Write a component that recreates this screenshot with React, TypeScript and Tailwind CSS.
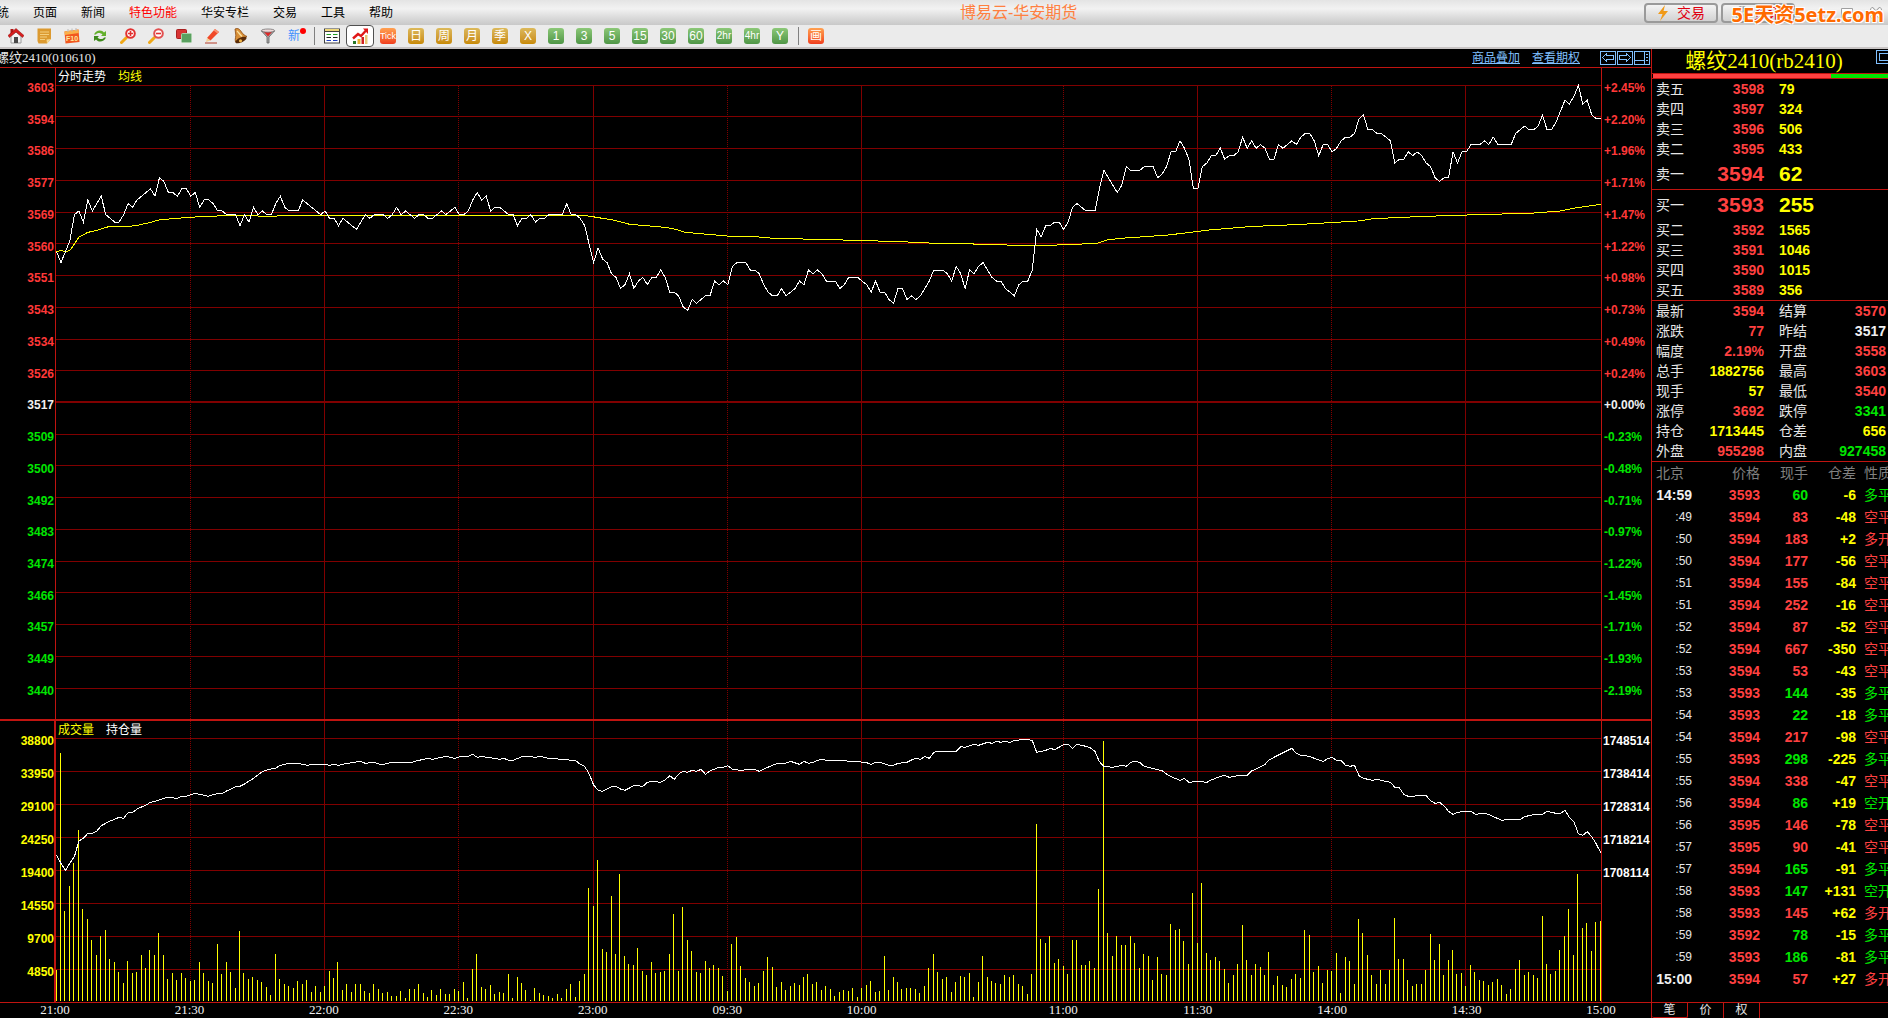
import React, { useState } from 'react'

const STEP = 4.476;
const BASE_PRICE = 3517;
const TOP_PRICE = 3603;

// one close price per minute, 21:00 -> 15:00
const prices = [
    3558, 3555, 3558, 3561, 3568, 3569, 3566, 3572, 3569, 3571, 3573, 3568, 3567, 3566, 3566, 3568, 3571, 3570, 3572, 3573,
    3574, 3575, 3573, 3578, 3577, 3574, 3574, 3573, 3575, 3575, 3573, 3574, 3570, 3572, 3572, 3571, 3569, 3569, 3568, 3568,
    3568, 3565, 3568, 3566, 3570, 3568, 3569, 3568, 3568, 3571, 3573, 3570, 3569, 3569, 3569, 3572, 3571, 3570, 3569, 3568,
    3569, 3567, 3567, 3565, 3567, 3566, 3565, 3564, 3566, 3568, 3567, 3568, 3568, 3568, 3567, 3568, 3570, 3568, 3569, 3568,
    3567, 3568, 3568, 3567, 3567, 3568, 3569, 3568, 3569, 3570, 3568, 3568, 3569, 3572, 3574, 3572, 3573, 3569, 3570, 3570,
    3569, 3568, 3568, 3565, 3567, 3567, 3568, 3566, 3567, 3567, 3568, 3568, 3568, 3568, 3571, 3568, 3568, 3567, 3565, 3560,
    3555, 3559, 3556, 3555, 3552, 3551, 3548, 3549, 3552, 3548, 3550, 3551, 3549, 3551, 3551, 3553, 3551, 3547, 3547, 3546,
    3543, 3542, 3545, 3544, 3545, 3546, 3546, 3550, 3549, 3550, 3549, 3554, 3555, 3555, 3555, 3553, 3553, 3552, 3549, 3547,
    3546, 3546, 3548, 3546, 3547, 3548, 3550, 3549, 3553, 3552, 3553, 3552, 3550, 3550, 3550, 3548, 3549, 3551, 3551, 3551,
    3550, 3549, 3547, 3550, 3547, 3547, 3545, 3544, 3548, 3548, 3545, 3546, 3545, 3546, 3548, 3550, 3553, 3553, 3553, 3552,
    3550, 3554, 3552, 3548, 3553, 3552, 3554, 3555, 3553, 3551, 3550, 3550, 3548, 3547, 3546, 3549, 3550, 3550, 3553, 3564,
    3562, 3565, 3565, 3566, 3566, 3564, 3566, 3570, 3571, 3570, 3569, 3569, 3569, 3575, 3580, 3578, 3576, 3574, 3576, 3581,
    3580, 3580, 3580, 3581, 3581, 3581, 3578, 3579, 3581, 3585, 3585, 3588, 3586, 3583, 3575, 3575, 3581, 3582, 3584, 3584,
    3586, 3583, 3584, 3584, 3585, 3589, 3586, 3588, 3586, 3587, 3586, 3583, 3583, 3587, 3586, 3587, 3588, 3587, 3589, 3590,
    3590, 3588, 3584, 3587, 3587, 3585, 3586, 3588, 3589, 3589, 3590, 3594, 3595, 3591, 3591, 3590, 3590, 3589, 3588, 3582,
    3583, 3583, 3585, 3584, 3585, 3584, 3582, 3581, 3578, 3577, 3578, 3578, 3585, 3582, 3585, 3585, 3587, 3587, 3587, 3588,
    3587, 3589, 3587, 3587, 3587, 3587, 3590, 3591, 3592, 3591, 3591, 3592, 3595, 3591, 3591, 3593, 3596, 3599, 3598, 3600,
    3603, 3598, 3599, 3595, 3594, 3594,
];

// [minute, average price]
const averages = [
    [0, 3557.9], [1, 3558.3], [2, 3558], [3, 3558.3], [5, 3561.9], [7, 3563.2], [9, 3563.7], [11.5, 3564.7], [16, 3564.8],
    [18, 3565.1], [21, 3565.9], [23, 3566.6], [26, 3566.9], [30, 3567.3], [37, 3567.7], [49, 3567.6], [51, 3567.8],
    [118, 3567.8], [124.5, 3566.5], [128, 3565.4], [136.5, 3564.5], [139, 3563.8], [140.5, 3563.2], [150, 3562.2],
    [156.5, 3562], [160, 3561.6], [180, 3561], [190, 3560.6], [197, 3560.2], [207, 3560], [214, 3559.7], [222, 3559.7],
    [232.5, 3560.2], [234.5, 3561.1], [238, 3561.6], [248.5, 3562.5], [258, 3563.9], [267, 3564.8], [277, 3565.3],
    [291, 3566.3], [294, 3566.9], [305, 3567.5], [315, 3567.9], [329.5, 3568.4], [336, 3569], [339.3, 3569.8], [345, 3570.8],
];

// top of each volume bar, counted downwards, 99 units to a grid row, 903 is zero
const VOLUME_ZERO = 903;
const volumes = [
    810, 159, 633, 558, 489, 390, 627, 657, 720, 765, 708, 690, 777, 786, 816, 849, 783, 819, 816, 765,
    804, 750, 765, 699, 765, 837, 819, 840, 819, 834, 843, 840, 786, 819, 843, 849, 732, 822, 786, 816,
    864, 693, 819, 837, 831, 840, 846, 861, 885, 762, 837, 852, 858, 864, 843, 852, 840, 876, 858, 876,
    858, 813, 834, 786, 870, 852, 876, 852, 852, 873, 879, 852, 867, 879, 876, 888, 888, 873, 894, 867,
    867, 852, 879, 891, 870, 885, 867, 882, 882, 867, 873, 846, 894, 807, 762, 861, 867, 855, 882, 876,
    879, 822, 894, 831, 849, 870, 900, 864, 879, 885, 888, 894, 882, 894, 867, 852, 891, 843, 822, 564,
    618, 480, 747, 756, 588, 762, 522, 768, 792, 795, 744, 813, 825, 786, 819, 816, 813, 762, 642, 813,
    621, 720, 753, 816, 819, 783, 804, 795, 804, 828, 873, 732, 711, 798, 834, 846, 858, 849, 813, 771,
    801, 861, 846, 870, 858, 849, 855, 831, 822, 852, 846, 870, 858, 867, 888, 876, 870, 873, 864, 891,
    864, 855, 843, 876, 873, 768, 870, 831, 846, 867, 864, 864, 867, 879, 858, 804, 762, 816, 837, 831,
    876, 846, 828, 831, 819, 891, 846, 768, 831, 843, 849, 852, 825, 831, 825, 852, 858, 882, 822, 372,
    717, 729, 708, 789, 777, 798, 822, 720, 720, 795, 795, 783, 804, 567, 123, 699, 768, 708, 735, 735,
    708, 729, 804, 762, 768, 840, 771, 822, 825, 672, 690, 687, 723, 792, 579, 729, 549, 759, 780, 771,
    783, 807, 849, 825, 792, 675, 780, 825, 792, 801, 825, 756, 855, 828, 855, 861, 837, 822, 834, 690,
    705, 816, 798, 849, 810, 813, 759, 879, 771, 783, 852, 657, 699, 765, 825, 852, 810, 852, 810, 654,
    777, 777, 840, 858, 852, 852, 810, 702, 780, 732, 825, 780, 750, 822, 819, 858, 795, 816, 840, 843,
    855, 846, 837, 855, 882, 867, 807, 780, 825, 816, 825, 834, 648, 792, 822, 813, 750, 708, 627, 765,
    522, 684, 669, 753, 666, 663,
];

// [minute, open interest] on the same scale as the volumes
const openInterest = [
    [0, 465], [1, 490], [2, 511], [3, 489], [4, 470], [5, 423], [6, 415], [7, 400], [8, 400], [9, 393], [10, 377],
    [12, 363], [14, 352], [15, 355], [16, 338], [17, 337], [18, 327], [20, 315], [21, 307], [22, 304], [24, 295],
    [25, 292], [27, 295], [28, 289], [29, 289], [31, 280], [33, 286], [34, 289], [35, 283], [37, 280], [38, 273],
    [40, 260], [41, 259], [42, 252], [44, 235], [46, 215], [47, 210], [49, 204], [50, 196], [52, 190], [54, 190],
    [56, 196], [57, 193], [60, 193], [61, 196], [62, 193], [63, 196], [65, 190], [68, 184], [69, 190], [71, 187],
    [72, 192], [73, 193], [75, 187], [79, 189], [80, 184], [83, 175], [84, 178], [87, 169], [89, 175], [90, 171],
    [92, 169], [93, 163], [94, 172], [95, 169], [96, 172], [98, 175], [99, 178], [100, 175], [101, 181], [102, 181],
    [104, 170], [106, 170], [107, 172], [108, 169], [110, 175], [113, 178], [116, 182], [117, 193], [118, 199],
    [119, 222], [120, 255], [121, 271], [122, 274], [123, 267], [124, 260], [125, 259], [126, 267], [127, 271],
    [128, 264], [129, 256], [131, 259], [132, 247], [133, 244], [135, 247], [136, 240], [137, 227], [138, 238],
    [139, 222], [140, 214], [141, 217], [142, 211], [143, 214], [144, 208], [145, 223], [146, 213], [148, 202],
    [149, 202], [150, 197], [151, 208], [153, 211], [155, 208], [156, 208], [157, 214], [158, 207], [160, 196],
    [161, 190], [163, 189], [164, 184], [166, 193], [167, 184], [168, 190], [169, 187], [170, 181], [171, 178],
    [172, 181], [176, 181], [177, 184], [179, 185], [181, 188], [182, 193], [183, 187], [184, 187], [186, 196],
    [187, 196], [188, 190], [190, 187], [191, 180], [192, 175], [193, 178], [194, 170], [195, 175], [196, 157],
    [197, 154], [201, 154], [202, 140], [203, 142], [205, 133], [206, 136], [208, 127], [209, 130], [210, 124],
    [211, 127], [212, 124], [213, 127], [214, 121], [216, 119], [217, 118], [218, 122], [219, 157], [220, 154],
    [221, 151], [222, 145], [223, 149], [225, 134], [226, 133], [227, 145], [228, 133], [230, 139], [231, 144],
    [232, 154], [233, 185], [234, 199], [236, 202], [238, 196], [239, 199], [240, 187], [241, 184], [242, 187],
    [243, 199], [245, 206], [247, 212], [248, 222], [249, 230], [251, 241], [252, 235], [253, 247], [255, 244],
    [257, 247], [258, 240], [260, 229], [261, 226], [262, 232], [264, 227], [266, 226], [267, 213], [269, 200],
    [270, 193], [271, 179], [273, 165], [276, 145], [277, 160], [278, 166], [280, 169], [281, 175], [283, 184],
    [284, 176], [285, 172], [286, 181], [287, 182], [288, 196], [289, 199], [290, 196], [291, 227], [292, 235],
    [294, 241], [295, 238], [297, 244], [298, 247], [299, 262], [300, 263], [301, 283], [302, 289], [305, 287],
    [306, 287], [307, 302], [308, 310], [309, 307], [310, 318], [311, 334], [312, 343], [313, 337], [315, 334],
    [316, 334], [317, 343], [319, 340], [320, 343], [322, 356], [323, 361], [324, 358], [327, 358], [328, 350],
    [330, 344], [332, 343], [333, 334], [335, 340], [336, 340], [337, 331], [338, 352], [339, 365], [340, 401],
    [341, 406], [342, 395], [343, 410], [344, 432], [345, 458],
];

const priceLabels = [
    '3603', '3594', '3586', '3577', '3569', '3560', '3551', '3543', '3534', '3526',
    '3517', '3509', '3500', '3492', '3483', '3474', '3466', '3457', '3449', '3440',
];
const percentLabels = [
    '+2.45%', '+2.20%', '+1.96%', '+1.71%', '+1.47%', '+1.22%', '+0.98%', '+0.73%', '+0.49%', '+0.24%',
    '+0.00%', '-0.23%', '-0.48%', '-0.71%', '-0.97%', '-1.22%', '-1.45%', '-1.71%', '-1.93%', '-2.19%',
];
const volumeLabels = ['38800', '33950', '29100', '24250', '19400', '14550', '9700', '4850'];
const interestLabels = ['1748514', '1738414', '1728314', '1718214', '1708114', '', '', ''];

// minutes is the distance to the next label
const timeLabels = [
    { text: '21:00', minutes: 30 },
    { text: '21:30', minutes: 30 },
    { text: '22:00', minutes: 30 },
    { text: '22:30', minutes: 30 },
    { text: '23:00', minutes: 30 },
    { text: '09:30', minutes: 30 },
    { text: '10:00', minutes: 45 },
    { text: '11:00', minutes: 30 },
    { text: '11:30', minutes: 30 },
    { text: '14:00', minutes: 30 },
    { text: '14:30', minutes: 30 },
    { text: '15:00', minutes: 0 },
];

const solidMinutes = [60, 120, 180, 255, 315];
const dottedMinutes = [30, 90, 150, 225, 285];

const asks = [
    ['卖五', '3598', '79'],
    ['卖四', '3597', '324'],
    ['卖三', '3596', '506'],
    ['卖二', '3595', '433'],
    ['卖一', '3594', '62'],
];
const bids = [
    ['买一', '3593', '255'],
    ['买二', '3592', '1565'],
    ['买三', '3591', '1046'],
    ['买四', '3590', '1015'],
    ['买五', '3589', '356'],
];

const RED = 'text-[#ff4040]';
const GREEN = 'text-[#00e600]';
const YELLOW = 'text-[#ffff00]';
const WHITE = 'text-[#f0f0f0]';

const stats = [
    ['最新', '3594', RED, '结算', '3570', RED],
    ['涨跌', '77', RED, '昨结', '3517', WHITE],
    ['幅度', '2.19%', RED, '开盘', '3558', RED],
    ['总手', '1882756', YELLOW, '最高', '3603', RED],
    ['现手', '57', YELLOW, '最低', '3540', RED],
    ['涨停', '3692', RED, '跌停', '3341', GREEN],
    ['持仓', '1713445', YELLOW, '仓差', '656', YELLOW],
    ['外盘', '955298', RED, '内盘', '927458', GREEN],
];

const ticks = [
    ['14:59', '3593', '60', '-6', '多平', GREEN],
    [':49', '3594', '83', '-48', '空平', RED],
    [':50', '3594', '183', '+2', '多开', RED],
    [':50', '3594', '177', '-56', '空平', RED],
    [':51', '3594', '155', '-84', '空平', RED],
    [':51', '3594', '252', '-16', '空平', RED],
    [':52', '3594', '87', '-52', '空平', RED],
    [':52', '3594', '667', '-350', '空平', RED],
    [':53', '3594', '53', '-43', '空平', RED],
    [':53', '3593', '144', '-35', '多平', GREEN],
    [':54', '3593', '22', '-18', '多平', GREEN],
    [':54', '3594', '217', '-98', '空平', RED],
    [':55', '3593', '298', '-225', '多平', GREEN],
    [':55', '3594', '338', '-47', '空平', RED],
    [':56', '3594', '86', '+19', '空开', GREEN],
    [':56', '3595', '146', '-78', '空平', RED],
    [':57', '3595', '90', '-41', '空平', RED],
    [':57', '3594', '165', '-91', '多平', GREEN],
    [':58', '3593', '147', '+131', '空开', GREEN],
    [':58', '3593', '145', '+62', '多开', RED],
    [':59', '3592', '78', '-15', '多平', GREEN],
    [':59', '3593', '186', '-81', '多平', GREEN],
    ['15:00', '3594', '57', '+27', '多开', RED],
];

const menus = ['系统', '页面', '新闻', '特色功能', '华安专栏', '交易', '工具', '帮助'];

const GOLD = 'bg-linear-to-b from-[#dcb95a] to-[#c88a00]';
const LEAF = 'bg-linear-to-b from-[#8cc878] to-[#4f9646]';
const FIRE = 'bg-linear-to-b from-[#ffa050] to-[#f03c1e]';

const periods = [
    { text: 'Tick', tone: FIRE, size: 'text-[9px]' },
    { text: '日', tone: GOLD, size: 'text-xs' },
    { text: '周', tone: GOLD, size: 'text-xs' },
    { text: '月', tone: GOLD, size: 'text-xs' },
    { text: '季', tone: GOLD, size: 'text-xs' },
    { text: 'X', tone: GOLD, size: 'text-xs' },
    { text: '1', tone: LEAF, size: 'text-xs' },
    { text: '3', tone: LEAF, size: 'text-xs' },
    { text: '5', tone: LEAF, size: 'text-xs' },
    { text: '15', tone: LEAF, size: 'text-xs' },
    { text: '30', tone: LEAF, size: 'text-xs' },
    { text: '60', tone: LEAF, size: 'text-xs' },
    { text: '2hr', tone: LEAF, size: 'text-[10px]' },
    { text: '4hr', tone: LEAF, size: 'text-[10px]' },
    { text: 'Y', tone: LEAF, size: 'text-xs' },
];

const Icon = ({ children }: { children: React.ReactNode }) => (
    <svg viewBox="0 0 16 16" className="h-4 w-4" aria-hidden="true">
        {children}
    </svg>
);

const tools = [
    {
        name: '首页',
        icon: (
            <Icon>
                <path d="M3 8 L8 4 L13 8 V15 H3 Z" fill="#f4f4f4" stroke="#9a9a9a" strokeWidth="1" />
                <path d="M2.5 1 H5.5 V4 L2.5 6 Z" fill="#b01818" />
                <path d="M8 0.5 L16 7.5 L14.5 9.5 L8 4 L1.5 9.5 L0 7.5 Z" fill="#d81e1e" stroke="#8c0e0e" strokeWidth="0.5" />
                <rect x="6" y="9" width="4" height="6" fill="#4a4a4a" />
            </Icon>
        ),
    },
    {
        name: '便签',
        icon: (
            <Icon>
                <path d="M1.5 0.5 H15 V11 L11 15.5 H2.5 L1.5 13 Z" fill="#dc9a30" />
                <path d="M15 11 L11 15.5 L10.5 11.5 Z" fill="#f6d890" />
                <path d="M4 4 H13 M4 6.5 H13 M4 9 H11 M4 11.5 H9" stroke="#f4cf80" strokeWidth="1" />
            </Icon>
        ),
    },
    {
        name: 'F10',
        icon: (
            <Icon>
                <path d="M0.5 3.5 L14.5 1.5 L15.5 14 L1.5 15.5 Z" fill="#f2571e" />
                <path d="M0.5 3.5 L14.5 1.5 L14.8 5 L0.8 7 Z" fill="#fbb04a" />
                <path d="M4 1 V4 M8 0.5 V3.5 M12 0 V3" stroke="#b8b8b8" strokeWidth="1" />
                <text x="8" y="13" fontSize="7" fontWeight="bold" textAnchor="middle" fill="#ffe9a0" fontFamily="Liberation Sans">F10</text>
            </Icon>
        ),
    },
    {
        name: '刷新',
        icon: (
            <Icon>
                <path d="M2 6.5 C4 1.5 10 1.5 12 4.5 L14 3 V8 H9 L10.5 6.5 C8.5 4.5 5 4.5 4 6.5 Z" fill="#63b02c" />
                <path d="M14 9.5 C12 14.5 6 14.5 4 11.5 L2 13 V8 H7 L5.5 9.5 C7.5 11.5 11 11.5 12 9.5 Z" fill="#3e8a1c" />
            </Icon>
        ),
    },
    {
        name: '放大',
        icon: (
            <Icon>
                <path d="M1.5 14.5 L6.5 9.5" stroke="#f0a818" strokeWidth="3" strokeLinecap="round" />
                <circle cx="10.5" cy="5.5" r="4.3" fill="#fff" stroke="#e23030" strokeWidth="2" />
                <path d="M8 5.5 H13 M10.5 3 V8" stroke="#e23030" strokeWidth="1.6" />
            </Icon>
        ),
    },
    {
        name: '缩小',
        icon: (
            <Icon>
                <path d="M1.5 14.5 L6.5 9.5" stroke="#f0a818" strokeWidth="3" strokeLinecap="round" />
                <circle cx="10.5" cy="5.5" r="4.3" fill="#fff" stroke="#e25050" strokeWidth="2" />
                <path d="M8 5.5 H13" stroke="#e23030" strokeWidth="1.6" />
            </Icon>
        ),
    },
    {
        name: '叠加',
        icon: (
            <Icon>
                <rect x="0.5" y="1.5" width="10" height="9" rx="1" fill="#d83434" stroke="#a82020" />
                <rect x="5.5" y="5.5" width="10" height="9" rx="1" fill="#5aa060" stroke="#a8d0a8" />
            </Icon>
        ),
    },
    {
        name: '画线',
        icon: (
            <Icon>
                <path d="M3 10 L11 1 L15 4 L6.5 12.5 Z" fill="#f04828" />
                <path d="M11 1 L15 4 L13.5 5.5 L9.6 2.5 Z" fill="#f89070" />
                <path d="M3 10 L6.5 12.5 L2 14 Z" fill="#f6cf94" />
                <path d="M1 15 H13" stroke="#b43a28" strokeWidth="1" />
            </Icon>
        ),
    },
    {
        name: '预警',
        icon: (
            <Icon>
                <path d="M3 1 C6 -0.5 8 1.5 9.5 4 C11 6.5 13 7.5 15 8.5 L3.5 14 C2.5 11 4.5 8 3.5 5 Z" fill="#d99038" stroke="#8a4a10" strokeWidth="0.8" />
                <path d="M5 3 C7 4.5 8 7 10 8.5" stroke="#fbe0a0" strokeWidth="1.4" fill="none" />
                <ellipse cx="9" cy="12" rx="6" ry="2.4" transform="rotate(-24 9 12)" fill="#5a2c08" />
                <circle cx="8.5" cy="12.8" r="1.6" fill="#f2b84a" />
            </Icon>
        ),
    },
    {
        name: '筛选',
        icon: (
            <Icon>
                <path d="M1.5 3 L7 9 V15 H9 V9 L14.5 3 Z" fill="#a8a8a8" stroke="#606060" strokeWidth="0.8" />
                <path d="M4 4 L8 8.5 L12 4 Z" fill="#e02828" />
                <ellipse cx="8" cy="2.6" rx="6.6" ry="1.6" fill="#f0d8d8" stroke="#707070" strokeWidth="0.8" />
            </Icon>
        ),
    },
];

const toPoints = (rows: number[][], getY: (value: number) => number) =>
    rows.map(([minute, value]) => `${minute * STEP + 0.5},${getY(value)}`).join(' ');

const VerticalGrid = ({ from, to }: { from: number; to: number }) => (
    <g stroke="#800000" shapeRendering="crispEdges">
        {solidMinutes.map((minute) => {
            const x = Math.floor(minute * STEP) + 0.5;
            return <line key={minute} x1={x} x2={x} y1={from} y2={to} vectorEffect="non-scaling-stroke" />;
        })}
        {dottedMinutes.map((minute) => {
            const x = Math.floor(minute * STEP) + 0.5;
            return <line key={minute} x1={x} x2={x} y1={from} y2={to} strokeDasharray="1 1" vectorEffect="non-scaling-stroke" />;
        })}
    </g>
);

const PriceChart = () => {
    const getY = (price: number) => 17.5 + (TOP_PRICE - price) * 3.69;

    return (
        <svg viewBox="0 0 1545 651" preserveAspectRatio="none" className="block min-h-0 w-full min-w-0 flex-1">
            <g stroke="#800000" shapeRendering="crispEdges">
                {priceLabels.map((label, i) => {
                    const isBase = label === String(BASE_PRICE);
                    const y = Math.floor(17.2 + i * 31.73) + (isBase ? 0 : 0.5);
                    return (
                        <line
                            key={label}
                            x1="0"
                            x2="1545"
                            y1={y}
                            y2={y}
                            strokeWidth={isBase ? 2 : 1}
                            vectorEffect="non-scaling-stroke"
                        />
                    );
                })}
            </g>
            <VerticalGrid from={18} to={651} />
            <g fill="none" shapeRendering="crispEdges">
                <polyline points={toPoints(averages, getY)} stroke="#ffff00" vectorEffect="non-scaling-stroke" />
                <polyline
                    points={toPoints(prices.map((price, i) => [i, price]), getY)}
                    stroke="#ffffff"
                    vectorEffect="non-scaling-stroke"
                />
            </g>
        </svg>
    );
};

const VolumeChart = () => {
    const getY = (value: number) => (value - 63) / 3;

    return (
        <svg viewBox="0 0 1545 281" preserveAspectRatio="none" className="block min-h-0 w-full min-w-0 flex-1">
            <g stroke="#800000" shapeRendering="crispEdges">
                {volumeLabels.map((label, i) => (
                    <line key={label} x1="0" x2="1545" y1={17.5 + i * 33} y2={17.5 + i * 33} vectorEffect="non-scaling-stroke" />
                ))}
            </g>
            <VerticalGrid from={0} to={281} />
            <g stroke="#ffff00" shapeRendering="crispEdges">
                {volumes.map((top, i) => {
                    const x = Math.floor(i * STEP) + 0.5;
                    return <line key={i} x1={x} x2={x} y1={getY(top)} y2={getY(VOLUME_ZERO)} vectorEffect="non-scaling-stroke" />;
                })}
            </g>
            <polyline
                points={toPoints(openInterest, getY)}
                fill="none"
                stroke="#ffffff"
                shapeRendering="crispEdges"
                vectorEffect="non-scaling-stroke"
            />
        </svg>
    );
};

const getAxisColor = (index: number) => {
    if (index < 10) return 'text-[#ff3838]';
    return index === 10 ? WHITE : GREEN;
};

const QuoteRow = ({ row, big }: { row: string[]; big: boolean }) => (
    <tr className={big ? 'h-[30px]' : 'h-5'}>
        <th className="w-[50px] pl-1 text-left font-normal text-[#e6e6e6]">{row[0]}</th>
        <td className={`w-[62px] text-right font-bold ${RED} ${big ? 'text-[21px]' : ''}`}>{row[1]}</td>
        <td className={`pl-[15px] font-bold ${YELLOW} ${big ? 'text-[21px]' : ''}`}>{row[2]}</td>
    </tr>
);

const App = () => {
    const [activeTab, setActiveTab] = useState('笔');

    return (
        <div className="flex min-h-screen flex-col overflow-hidden bg-black font-['Liberation_Sans','Noto_Sans_CJK_SC',sans-serif] text-xs">
            <header className="relative flex h-[25px] items-center bg-linear-to-b from-[#e4e4e4] via-[#f2f2f2] via-35% to-[#c8c8c8]">
                <nav className="-ml-[15px] flex gap-6 text-black">
                    {menus.map((menu) => (
                        <button key={menu} className={menu === '特色功能' ? 'text-[#ff0000]' : ''}>
                            {menu}
                        </button>
                    ))}
                </nav>

                <h1 className="flex-1 text-center text-base leading-6 text-[#ff8040]">博易云-华安期货</h1>

                <div className="flex items-center gap-[3px]">
                    <button className="flex h-5 w-[74px] items-center justify-center gap-2 rounded border-2 border-[#9a9a9a] bg-linear-to-b from-[#f4f4f4] to-[#d2d2d2] text-sm text-[#e00010]">
                        <svg viewBox="0 0 12 16" className="h-4 w-3" aria-hidden="true">
                            <path d="M8 0 L1 9 H5.5 L3 16 L11 6 H6.5 Z" fill="#f09a18" />
                        </svg>
                        交易
                    </button>
                    <button className="flex h-5 w-[74px] items-center justify-center gap-1 rounded border-2 border-[#9a9a9a] bg-linear-to-b from-[#f4f4f4] to-[#d2d2d2] text-sm text-[#e00010]">
                        <svg viewBox="0 0 16 16" className="h-4 w-4" aria-hidden="true">
                            <circle cx="8" cy="8" r="7" fill="#8a8a8a" />
                            <path d="M1 8 H15 M8 1 V15" stroke="#d8d8d8" strokeWidth="1.5" />
                        </svg>
                        资讯
                    </button>
                    <div className="flex gap-[5px] pl-2">
                        <button aria-label="最小化" className="flex h-4 w-6 items-center justify-center">
                            <svg viewBox="0 0 12 12" className="h-3 w-3"><rect x="0.5" y="5.5" width="11" height="3" fill="#fff" stroke="#a0a0a0" /></svg>
                        </button>
                        <button aria-label="最大化" className="flex h-4 w-6 items-center justify-center">
                            <svg viewBox="0 0 12 12" className="h-3 w-3"><path d="M0.5 1.5 H11.5 V10.5 H0.5 Z M3.5 4.5 H8.5 V7.5 H3.5 Z" fill="#fff" fillRule="evenodd" stroke="#a0a0a0" /></svg>
                        </button>
                        <button aria-label="关闭" className="flex h-4 w-6 items-center justify-center">
                            <svg viewBox="0 0 12 12" className="h-3 w-3"><path d="M1 1 L11 11 M11 1 L1 11" stroke="#a0a0a0" strokeWidth="4" /><path d="M1.5 1.5 L10.5 10.5 M10.5 1.5 L1.5 10.5" stroke="#fff" strokeWidth="2" /></svg>
                        </button>
                    </div>
                </div>

                <span className="absolute top-px right-1 font-['Noto_Sans','Noto_Sans_CJK_SC',sans-serif] text-xl leading-7 font-bold text-[#ff6a00] [text-shadow:1px_1px_0_#fff,-1px_-1px_0_#fff,1px_-1px_0_#fff,-1px_1px_0_#fff]">
                    5E天资5etz.com
                </span>
            </header>

            <div className="flex h-6 items-center border-b-2 border-[#c8c4c4] bg-[#ebebeb] pl-0.5">
                {tools.map((tool) => (
                    <button key={tool.name} aria-label={tool.name} className="flex w-7 items-center justify-center">
                        {tool.icon}
                    </button>
                ))}
                <button className="relative w-7 pr-1 text-center text-xs text-[#4090ff]">
                    新
                    <span className="absolute top-0 right-1 h-1.5 w-1.5 rounded-full bg-[#ff0000]" />
                </button>
                <span className="flex h-[18px] w-2 justify-center"><span className="w-px bg-[#808080]" /></span>
                <button aria-label="报价" className="flex w-7 items-center justify-center">
                    <Icon>
                        <rect x="0.5" y="1" width="15" height="14" fill="#fff" stroke="#404040" />
                        <rect x="1" y="1" width="14" height="2" fill="#f0d878" />
                        <path d="M1 3.5 H15" stroke="#404040" />
                        <path d="M2.5 6.5 H7 M9 6.5 H13.5" stroke="#20a020" strokeWidth="1.2" />
                        <path d="M2.5 9.5 H7 M9 9.5 H13.5" stroke="#202020" strokeWidth="1.2" />
                        <path d="M2.5 12.5 H7 M9 12.5 H13.5" stroke="#2040c0" strokeWidth="1.2" />
                    </Icon>
                </button>
                <button aria-label="分时" className="flex h-[22px] w-7 items-center justify-center rounded border border-[#505050] bg-white">
                    <Icon>
                        <path d="M1 16 V13 H4 V16 Z" fill="#287828" />
                        <path d="M5.5 16 V11 H8.5 V16 Z" fill="#e8b030" />
                        <path d="M9.5 16 V9 H12 V16 Z" fill="#d02020" />
                        <path d="M13 16 V7 H15.5 V16 Z" fill="#e8c878" />
                        <path d="M1 10.5 L6 6 L9 8 L14 2.5" fill="none" stroke="#e01818" strokeWidth="2.4" />
                        <path d="M11 0.5 H16 V6 Z" fill="#e01818" />
                    </Icon>
                </button>
                {periods.map((period) => (
                    <button key={period.text} className="flex w-7 items-center justify-center">
                        <span className={`flex h-4 w-4 items-center justify-center rounded-[3px] leading-4 text-white ${period.tone} ${period.size}`}>
                            {period.text}
                        </span>
                    </button>
                ))}
                <span className="flex h-[18px] w-2 justify-center"><span className="w-px bg-[#808080]" /></span>
                <button className="flex w-7 items-center justify-center">
                    <span className={`flex h-4 w-4 items-center justify-center rounded-[3px] text-xs leading-4 text-white ${FIRE}`}>画</span>
                </button>
            </div>

            <main className="flex flex-1">
                <section className="flex min-w-0 flex-1 flex-col">
                    <div className="flex h-[19px] items-center border-b border-[#c01410] pr-px font-['Liberation_Serif','Noto_Sans_CJK_SC',serif]">
                        <h2 className="-ml-1 flex-1 text-[13px] text-[#e6e6e6]">螺纹2410(010610)</h2>
                        <a href="#overlay" className="mr-3 text-[#80c0ff] underline">商品叠加</a>
                        <a href="#options" className="mr-5 text-[#80c0ff] underline">查看期权</a>
                        <div className="flex gap-px">
                            <button aria-label="上一个">
                                <svg viewBox="0 0 16 14" className="h-3.5 w-4" fill="none" stroke="#80c0ff" shapeRendering="crispEdges">
                                    <rect x="0.5" y="0.5" width="15" height="13" />
                                    <path d="M6.5 2.5 L2.5 6.5 L6.5 10.5 V8.5 H13.5 V4.5 H6.5 Z" />
                                </svg>
                            </button>
                            <button aria-label="下一个">
                                <svg viewBox="0 0 16 14" className="h-3.5 w-4" fill="none" stroke="#80c0ff" shapeRendering="crispEdges">
                                    <rect x="0.5" y="0.5" width="15" height="13" />
                                    <path d="M9.5 2.5 L13.5 6.5 L9.5 10.5 V8.5 H2.5 V4.5 H9.5 Z" />
                                </svg>
                            </button>
                            <button aria-label="布局">
                                <svg viewBox="0 0 16 14" className="h-3.5 w-4" fill="none" stroke="#80c0ff" shapeRendering="crispEdges">
                                    <rect x="0.5" y="0.5" width="15" height="13" />
                                    <path d="M10.5 0 V14 M0 9.5 H10 M12 3.5 H14 M12 6.5 H14 M12 9.5 H14" />
                                </svg>
                            </button>
                        </div>
                    </div>

                    <div className="flex min-h-0 grow-[651] basis-0">
                        <ul className="flex w-14 flex-col justify-between border-r border-[#c01410] pt-3 pr-px pb-5 text-right font-bold">
                            {priceLabels.map((label, i) => (
                                <li key={label} className={`leading-4 ${getAxisColor(i)}`}>{label}</li>
                            ))}
                        </ul>
                        <div className="relative flex min-w-0 flex-1">
                            <PriceChart />
                            <p className="absolute top-0 left-0.5 flex gap-3 leading-[18px]">
                                <span className="text-white">分时走势</span>
                                <span className={YELLOW}>均线</span>
                            </p>
                        </div>
                        <ul className="flex w-[50px] flex-col justify-between border-l border-[#c01410] pt-3 pb-5 pl-0.5 font-bold">
                            {percentLabels.map((label, i) => (
                                <li key={label} className={`leading-4 ${getAxisColor(i)}`}>{label}</li>
                            ))}
                        </ul>
                    </div>

                    <div className="flex min-h-0 grow-[281] basis-0 border-t-2 border-b border-[#c01410]">
                        <ul className={`flex w-14 flex-col justify-between border-r-2 border-[#c01410] pt-3 pb-[22px] text-right font-bold ${YELLOW}`}>
                            {volumeLabels.map((label) => (
                                <li key={label} className="leading-4">{label}</li>
                            ))}
                        </ul>
                        <div className="relative flex min-w-0 flex-1">
                            <VolumeChart />
                            <p className="absolute top-0 left-0.5 flex gap-3 leading-[18px]">
                                <span className={YELLOW}>成交量</span>
                                <span className="text-white">持仓量</span>
                            </p>
                        </div>
                        <ul className="flex w-[50px] flex-col justify-between border-l border-[#c01410] pt-3 pb-[22px] pl-px font-bold text-white">
                            {interestLabels.map((label, i) => (
                                <li key={i} className="h-4 leading-4">{label}</li>
                            ))}
                        </ul>
                    </div>

                    <div className="flex h-[15px] pr-[50px] pl-[55px] font-['Liberation_Serif',serif] text-[13px] leading-[14px] text-[#f0f0f0]">
                        {timeLabels.map((label) => (
                            <div key={label.text} className="min-w-0 basis-0" style={{ flexGrow: label.minutes }}>
                                <span className="flex w-0 justify-center">{label.text}</span>
                            </div>
                        ))}
                    </div>
                </section>

                <aside className="w-[237px] shrink-0 overflow-hidden border-l border-[#c01410] text-sm">
                    <div className="flex h-[25px] items-start justify-between border-b border-[#c01410]">
                        <h2 className={`flex-1 text-center font-['Liberation_Serif','Noto_Sans_CJK_SC',serif] text-[21px] leading-6 ${YELLOW}`}>
                            螺纹2410(rb2410)
                        </h2>
                        <button aria-label="还原" className="h-[15px] w-3 shrink-0 overflow-hidden">
                            <svg viewBox="0 0 16 14" className="mt-px h-3.5 w-4 max-w-none" fill="none" stroke="#80c0ff" shapeRendering="crispEdges">
                                <rect x="0.5" y="0.5" width="15" height="13" />
                                <rect x="3.5" y="3.5" width="9" height="7" strokeWidth="1" />
                            </svg>
                        </button>
                    </div>
                    <div className="flex h-[5px] border-b border-[#c01410] pl-px">
                        <span className="w-[178px] bg-[#ff4040]" />
                        <span className="flex-1 bg-[#00e600]" />
                    </div>

                    <table className="w-full table-fixed leading-5">
                        <tbody>
                            {asks.map((row, i) => <QuoteRow key={row[0]} row={row} big={i === 4} />)}
                        </tbody>
                    </table>
                    <table className="w-full table-fixed border-separate border-spacing-0 border-y border-[#c01410] leading-5">
                        <tbody>
                            {bids.map((row, i) => <QuoteRow key={row[0]} row={row} big={i === 0} />)}
                        </tbody>
                    </table>

                    <table className="w-full table-fixed leading-5">
                        <tbody>
                            {stats.map((row) => (
                                <tr key={row[0]} className="h-5">
                                    <th className="w-10 pl-1 text-left font-normal text-[#e6e6e6]">{row[0]}</th>
                                    <td className={`w-[72px] text-right font-bold ${row[2]}`}>{row[1]}</td>
                                    <th className="w-[54px] pl-[15px] text-left font-normal text-[#e6e6e6]">{row[3]}</th>
                                    <td className={`pr-0.5 text-right font-bold ${row[5]}`}>{row[4]}</td>
                                </tr>
                            ))}
                        </tbody>
                    </table>

                    <table className="w-full table-fixed border-separate border-spacing-0 border-t border-[#c01410] text-right leading-[22px] whitespace-nowrap">
                        <thead>
                            <tr className="h-[22px] text-[#808080]">
                                <th className="w-[52px] pl-1 text-left font-normal">北京</th>
                                <th className="w-14 font-normal">价格</th>
                                <th className="w-12 font-normal">现手</th>
                                <th className="w-12 font-normal">仓差</th>
                                <th className="overflow-hidden pl-2 text-left font-normal">性质</th>
                            </tr>
                        </thead>
                        <tbody>
                            {ticks.map(([time, price, volume, change, kind, color], i) => (
                                <tr key={i} className="h-[22px] font-bold">
                                    <td className={time.length > 3 ? 'pr-3 text-[#f0f0f0]' : 'pr-3 text-xs leading-[22px] font-normal text-[#e6e6e6]'}>
                                        {time}
                                    </td>
                                    <td className={RED}>{price}</td>
                                    <td className={color}>{volume}</td>
                                    <td className={YELLOW}>{change}</td>
                                    <td className={`overflow-hidden pl-2 text-left font-normal ${color}`}>{kind}</td>
                                </tr>
                            ))}
                        </tbody>
                    </table>

                    <div className="mt-3 flex h-4 border-t border-[#c01410] text-xs leading-[15px] text-[#e6e6e6]">
                        {['笔', '价', '权'].map((tab) => (
                            <button
                                key={tab}
                                onClick={() => setActiveTab(tab)}
                                className={`w-9 border-r border-[#c01410] ${tab === activeTab ? 'rounded-b-xs border-b' : ''}`}
                            >
                                {tab}
                            </button>
                        ))}
                    </div>
                </aside>
            </main>
        </div>
    )
}
export default App
